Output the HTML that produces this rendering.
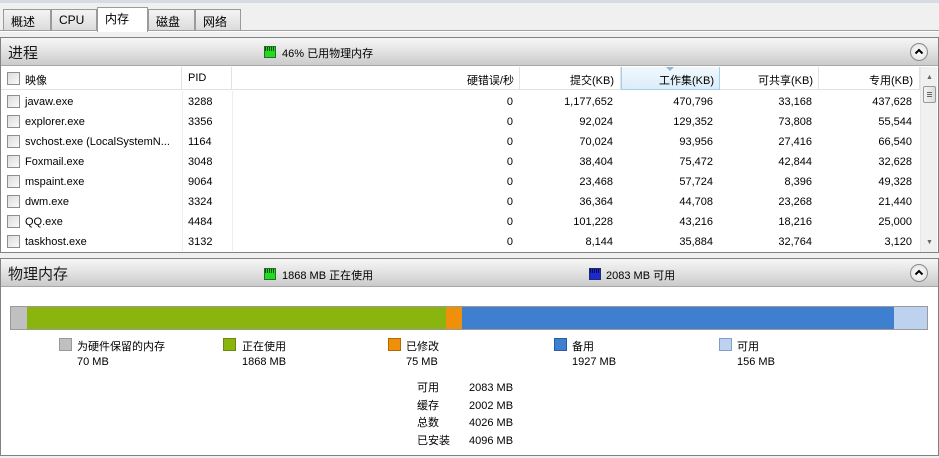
<!DOCTYPE html>
<html><head><meta charset="utf-8"><style>
*{margin:0;padding:0;box-sizing:border-box}
body{width:939px;height:458px;overflow:hidden;background:#f0f0f0;font-family:"Liberation Sans","Noto Sans CJK SC",sans-serif;font-size:11px;color:#000;position:relative}
.a{position:absolute;white-space:nowrap}
.tab{position:absolute;top:9px;height:21px;border:1px solid #9a9a9a;border-bottom:none;background:linear-gradient(#f4f4f4,#dcdcdc);font-size:12px;padding:3px 0 0 7px}
.box{position:absolute;left:0;width:939px;border:1px solid #828282;background:#fff}
.hdr{position:absolute;left:0;top:0;width:937px;height:28px;background:linear-gradient(#f6f6f6,#e4e4e4 45%,#cbcbcb);border-bottom:1px solid #a8a8a8}
.ttl{position:absolute;left:7px;top:4px;font-size:15px;color:#1a1a1a}
.col{position:absolute;top:0;height:23px;border-right:1px solid #e2e2e2;padding-top:5px}
.cb{position:absolute;width:13px;height:13px;border:1px solid #8e8e8e;background:linear-gradient(135deg,#dcdcdc,#fafafa)}
.r{text-align:right}
.up{position:absolute;right:10px;top:5px;width:18px;height:18px;border-radius:50%;border:1px solid #8a8a8a;background:radial-gradient(#fff,#ddd)}
.sw{position:absolute;width:13px;height:13px}
.meter{position:absolute;width:12px;height:12px;border:1px solid #2a6a2a;background:#1fdc1f;background-image:repeating-linear-gradient(90deg,#0a4a0a 0 1px,transparent 1px 2px);background-size:100% 4px;background-repeat:no-repeat}
</style></head><body>
<div class="a" style="left:0;top:0;width:939px;height:3px;background:#d6dbe6"></div>
<div class="tab" style="left:3px;width:48px">概述</div>
<div class="tab" style="left:51px;width:46px">CPU</div>
<div class="tab" style="left:148px;width:47px">磁盘</div>
<div class="tab" style="left:195px;width:46px">网络</div>
<div class="a" style="left:0;top:30px;width:939px;height:2px;border-top:1px solid #a0a0a0;background:#fff"></div>
<div class="tab" style="left:97px;top:7px;height:25px;width:51px;background:#fff;padding-top:2px">内存</div>

<div class="box" style="top:37px;height:216px">
 <div class="hdr"><div class="ttl">进程</div>
  <div class="meter" style="left:263px;top:8px"></div>
  <div class="a" style="left:281px;top:7px;font-size:11px">46% 已用物理内存</div>
  <div class="up"><svg width="16" height="16" style="position:absolute;left:0;top:0"><path d="M4.5 9.5 L8 6 L11.5 9.5" stroke="#000" stroke-width="2" fill="none"/></svg></div>
 </div>
 <div class="a" style="left:0;top:29px;width:919px;height:23px;border-bottom:1px solid #e2e2e2">
  <div class="cb" style="left:6px;top:5px"></div>
  <div class="a" style="left:24px;top:5px">映像</div>
  <div class="col" style="left:0;width:181px"></div>
  <div class="col" style="left:181px;width:50px;padding-left:6px">PID</div>
  <div class="col r" style="left:231px;width:288px;padding-right:5px">硬错误/秒</div>
  <div class="col r" style="left:519px;width:101px;padding-right:6px">提交(KB)</div>
  <div class="col r" style="left:620px;width:99px;padding-right:5px;background:linear-gradient(#f0f8fd,#dcedf8);border:1px solid #9fd0ee;border-top:none">工作集(KB)<svg width="8" height="4" style="position:absolute;left:44px;top:0"><path d="M0 0h8L4 4z" fill="#8fb6d6"/></svg></div>
  <div class="col r" style="left:719px;width:99px;padding-right:5px">可共享(KB)</div>
  <div class="col r" style="left:818px;width:101px;padding-right:6px">专用(KB)</div>
 </div>
 <div class="a" style="left:919px;top:29px;width:17px;height:185px;background:#f0f0f0;border-left:1px solid #e6e6e6">
  <div class="a" style="left:5px;top:7px;font-size:7px;color:#666">▲</div>
  <div class="a" style="left:2px;top:19px;width:13px;height:17px;border:1px solid #999;border-radius:2px;background:linear-gradient(90deg,#f4f4f4,#dcdcdc)"><div class="a" style="left:3px;top:5px;width:5px;height:5px;border-top:1px solid #666;border-bottom:1px solid #666"></div><div class="a" style="left:3px;top:7px;width:5px;height:1px;background:#666"></div></div>
  <div class="a" style="left:5px;top:172px;font-size:7px;color:#666">▼</div>
 </div>
 <div id="rows"></div>
</div>

<div class="box" style="top:258px;height:198px">
 <div class="hdr"><div class="ttl">物理内存</div>
  <div class="meter" style="left:263px;top:9px"></div>
  <div class="a" style="left:281px;top:8px">1868 MB 正在使用</div>
  <div class="meter" style="left:588px;top:9px;border-color:#222a6a;background-color:#1a2ad0;background-image:repeating-linear-gradient(90deg,#0a0a4a 0 1px,transparent 1px 2px);background-size:100% 4px;background-repeat:no-repeat"></div>
  <div class="a" style="left:605px;top:8px">2083 MB 可用</div>
  <div class="up"><svg width="16" height="16" style="position:absolute;left:0;top:0"><path d="M4.5 9.5 L8 6 L11.5 9.5" stroke="#000" stroke-width="2" fill="none"/></svg></div>
 </div>
 <div class="a" style="left:9px;top:47px;width:918px;height:24px;border:1px solid #9a9a9a;display:flex">
  <div style="width:16px;background:#c0c0c0"></div>
  <div style="width:419px;background:#8ab50f"></div>
  <div style="width:16px;background:#f0900a"></div>
  <div style="width:432px;background:#3f7fd0"></div>
  <div style="flex:1;background:#bcd2ee"></div>
 </div>
 <div class="sw" style="left:58px;top:79px;background:#c0c0c0;border:1px solid #999"></div><div class="a" style="left:76px;top:79px">为硬件保留的内存</div><div class="a" style="left:76px;top:97px">70 MB</div>
 <div class="sw" style="left:222px;top:79px;background:#8ab50f;border:1px solid #6a8a0a"></div><div class="a" style="left:241px;top:79px">正在使用</div><div class="a" style="left:241px;top:97px">1868 MB</div>
 <div class="sw" style="left:387px;top:79px;background:#f0900a;border:1px solid #b06a00"></div><div class="a" style="left:405px;top:79px">已修改</div><div class="a" style="left:405px;top:97px">75 MB</div>
 <div class="sw" style="left:553px;top:79px;background:#3f7fd0;border:1px solid #2a5ea0"></div><div class="a" style="left:571px;top:79px">备用</div><div class="a" style="left:571px;top:97px">1927 MB</div>
 <div class="sw" style="left:718px;top:79px;background:#bcd2ee;border:1px solid #7f9fc8"></div><div class="a" style="left:736px;top:79px">可用</div><div class="a" style="left:736px;top:97px">156 MB</div>
 <div class="a" style="left:416px;top:121px;line-height:17.5px">可用<br>缓存<br>总数<br>已安装</div>
 <div class="a" style="left:468px;top:121px;line-height:17.5px">2083 MB<br>2002 MB<br>4026 MB<br>4096 MB</div>
</div>
<script>
var d=[["javaw.exe","3288","1,177,652","470,796","33,168","437,628"],["explorer.exe","3356","92,024","129,352","73,808","55,544"],["svchost.exe (LocalSystemN...","1164","70,024","93,956","27,416","66,540"],["Foxmail.exe","3048","38,404","75,472","42,844","32,628"],["mspaint.exe","9064","23,468","57,724","8,396","49,328"],["dwm.exe","3324","36,364","44,708","23,268","21,440"],["QQ.exe","4484","101,228","43,216","18,216","25,000"],["taskhost.exe","3132","8,144","35,884","32,764","3,120"]];
var h="";d.forEach(function(r,i){var t=54+i*20;
h+='<div class="cb" style="left:6px;top:'+(t+3)+'px"></div>'+
'<div class="a" style="left:24px;top:'+(t+4)+'px">'+r[0]+'</div>'+
'<div class="a" style="left:181px;top:'+(t-1)+'px;width:1px;height:20px;background:#eee"></div>'+
'<div class="a" style="left:231px;top:'+(t-1)+'px;width:1px;height:20px;background:#eee"></div>'+
'<div class="a" style="left:187px;top:'+(t+4)+'px">'+r[1]+'</div>'+
'<div class="a r" style="right:425px;top:'+(t+4)+'px">0</div>'+
'<div class="a r" style="right:325px;top:'+(t+4)+'px">'+r[2]+'</div>'+
'<div class="a r" style="right:225px;top:'+(t+4)+'px">'+r[3]+'</div>'+
'<div class="a r" style="right:126px;top:'+(t+4)+'px">'+r[4]+'</div>'+
'<div class="a r" style="right:26px;top:'+(t+4)+'px">'+r[5]+'</div>';});
document.getElementById("rows").outerHTML=h;
</script>
</body></html>
